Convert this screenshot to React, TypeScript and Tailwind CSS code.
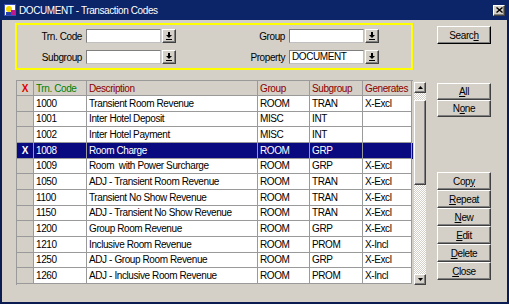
import React, { FunctionComponent } from 'react'

const rows: [string, string, string, string, string][] = [
  ['1000', 'Transient Room Revenue', 'ROOM', 'TRAN', 'X-Excl'],
  ['1001', 'Inter Hotel Deposit', 'MISC', 'INT', ''],
  ['1002', 'Inter Hotel Payment', 'MISC', 'INT', ''],
  ['1008', 'Room Charge', 'ROOM', 'GRP', ''],
  ['1009', 'Room  with Power Surcharge', 'ROOM', 'GRP', 'X-Excl'],
  ['1050', 'ADJ - Transient Room Revenue', 'ROOM', 'TRAN', 'X-Excl'],
  ['1100', 'Transient No Show Revenue', 'ROOM', 'TRAN', 'X-Excl'],
  ['1150', 'ADJ - Transient No Show Revenue', 'ROOM', 'TRAN', 'X-Excl'],
  ['1200', 'Group Room Revenue', 'ROOM', 'GRP', 'X-Excl'],
  ['1210', 'Inclusive Room Revenue', 'ROOM', 'PROM', 'X-Incl'],
  ['1250', 'ADJ - Group Room Revenue', 'ROOM', 'GRP', 'X-Excl'],
  ['1260', 'ADJ - Inclusive Room Revenue', 'ROOM', 'PROM', 'X-Incl'],
]

const SELECTED = '1008'

const raised =
  'border border-t-white border-l-white border-b-[#404040] border-r-[#404040] shadow-[inset_-1px_-1px_0_#808080] bg-[#d4d0c8]'

const DropButton: FunctionComponent = () => (
  <div className={`w-[14px] h-[14px] flex items-center justify-center ${raised}`}>
    <svg width="8" height="8" viewBox="0 0 8 8">
      <rect x="3" y="0" width="2" height="3" fill="#000" />
      <polygon points="1,3 7,3 4,6" fill="#000" />
      <rect x="1" y="7" width="6" height="1" fill="#000" />
    </svg>
  </div>
)

const Field: FunctionComponent<{ label: string; labelW: string; value?: string }> = ({
  label,
  labelW,
  value,
}) => (
  <div className="flex items-center h-[14px]">
    <div className={`${labelW} text-right pr-[4px]`}>{label}</div>
    <div className="w-[75px] h-[14px] bg-white border border-t-[#808080] border-l-[#808080] border-b-[#c0c0c0] border-r-[#c0c0c0] pl-[2px] leading-[12px]">
      {value}
    </div>
    <div className="ml-[1px]">
      <DropButton />
    </div>
  </div>
)

const Button: FunctionComponent<{ h: string; className?: string }> = ({ h, className, children }) => (
  <div className={`w-[54px] ${h} flex items-center justify-center ${raised} ${className ?? ''}`}>
    <span>{children}</span>
  </div>
)

const cols = ['w-[17px]', 'w-[53px]', 'w-[171px]', 'w-[52px]', 'w-[53px]', 'w-[49px]']

const ArrowBtn: FunctionComponent<{ up?: boolean }> = ({ up }) => (
  <div className={`w-[12px] h-[11px] flex items-center justify-center ${raised}`}>
    <svg width="5" height="3" viewBox="0 0 5 3">
      <polygon points={up ? '2.5,0 5,3 0,3' : '0,0 5,0 2.5,3'} fill="#000" />
    </svg>
  </div>
)

const dither =
  'bg-[repeating-conic-gradient(#ffffff_0_25%,#d4d0c8_0_50%)] bg-[length:2px_2px]'

const App: FunctionComponent = () => (
  <div className="w-[509px] h-[304px] flex flex-col bg-[#d4d0c8] border-x-2 border-b-2 border-[#0b1c52] font-['Liberation_Sans',Arial,sans-serif] text-[10px] tracking-[-0.4px] text-black">
    <div className="h-[20px] -mx-[2px] bg-[#0c2468] flex items-center pl-[3px] pr-[4px] text-white">
      <svg width="14" height="14" viewBox="0 0 14 14">
        <rect x="1" y="1" width="12" height="12" fill="#3a4fb8" />
        <rect x="2" y="2" width="10" height="10" fill="#ffffff" />
        <circle cx="6" cy="6" r="3" fill="#f3d800" />
        <rect x="8" y="7" width="4" height="5" fill="#c2188f" />
        <rect x="3" y="9" width="5" height="3" fill="#2a3fa8" />
      </svg>
      <span className="ml-[2px]">DOCUMENT - Transaction Codes</span>
      <div className={`ml-auto w-[12px] h-[11px] flex items-center justify-center ${raised}`}>
        <svg width="7" height="6" viewBox="0 0 7 6">
          <path d="M0.5 0.5 L6.5 5.5 M6.5 0.5 L0.5 5.5" stroke="#000" strokeWidth="1.4" />
        </svg>
      </div>
    </div>

    <div className="flex-1 flex pl-[13px]">
      <div className="w-[412px] flex flex-col">
        <div className="mt-[3px] w-[398px] h-[47px] border-2 border-[#ffff00] flex flex-col pt-[4px] gap-[7px]">
          <div className="flex">
            <Field label="Trn. Code" labelW="w-[69px]" />
            <Field label="Group" labelW="w-[113px]" />
          </div>
          <div className="flex">
            <Field label="Subgroup" labelW="w-[69px]" />
            <Field label="Property" labelW="w-[113px]" value="DOCUMENT" />
          </div>
        </div>

        <div className="mt-[10px] flex">
          <div className="ml-[1px] w-[397px] border-l border-t border-[#9a9a9a] flex flex-col">
            <div className="flex h-[15px]">
              {['X', 'Trn. Code', 'Description', 'Group', 'Subgroup', 'Generates'].map((h, i) => (
                <div
                  key={h}
                  className={`${cols[i]} border-r border-b border-[#9a9a9a] flex items-center ${
                    i === 0
                      ? 'justify-center text-[#e00000] font-bold'
                      : i === 1
                        ? 'pl-[2px] text-[#008000]'
                        : 'pl-[2px] text-[#8b0000]'
                  }`}
                >
                  {h}
                </div>
              ))}
            </div>
            {rows.map((r) => {
              const sel = r[0] === SELECTED
              return (
                <div key={r[0]} className={`flex h-[15.67px] ${sel ? 'bg-[#0a0a80] text-white' : ''}`}>
                  <div
                    className={`${cols[0]} border-r border-b border-[#9a9a9a] flex items-center justify-center font-bold ${
                      sel ? '' : 'bg-[#d4d0c8]'
                    }`}
                  >
                    {sel ? 'X' : ''}
                  </div>
                  {r.map((c, i) => (
                    <div
                      key={i}
                      className={`${cols[i + 1]} border-r border-b border-[#9a9a9a] flex items-center pl-[2px] whitespace-pre ${
                        sel ? '' : 'bg-white'
                      }`}
                    >
                      {c}
                    </div>
                  ))}
                </div>
              )
            })}
          </div>

          <div className="ml-[1px] mt-[2px] w-[12px] h-[203px] flex flex-col">
            <ArrowBtn up />
            <div className={`h-[7px] ${dither}`} />
            <div className={`h-[85px] ${raised}`} />
            <div className={`flex-1 ${dither}`} />
            <ArrowBtn />
          </div>
        </div>
      </div>

      <div className="ml-[10px] w-[54px] flex flex-col">
        <Button h="h-[18px]" className="mt-[6px] border-b-black border-r-black">
          Searc<u>h</u>
        </Button>
        <Button h="h-[17px]" className="mt-[39px]">
          <u>A</u>ll
        </Button>
        <Button h="h-[17px]">
          N<u>o</u>ne
        </Button>
        <Button h="h-[18px]" className="mt-[55px]">
          Cop<u>y</u>
        </Button>
        <Button h="h-[18px]">
          <u>R</u>epeat
        </Button>
        <Button h="h-[18px]">
          <u>N</u>ew
        </Button>
        <Button h="h-[18px]">
          <u>E</u>dit
        </Button>
        <Button h="h-[18px]">
          <u>D</u>elete
        </Button>
        <Button h="h-[18px]">
          <u>C</u>lose
        </Button>
      </div>
    </div>
  </div>
)

export default App
